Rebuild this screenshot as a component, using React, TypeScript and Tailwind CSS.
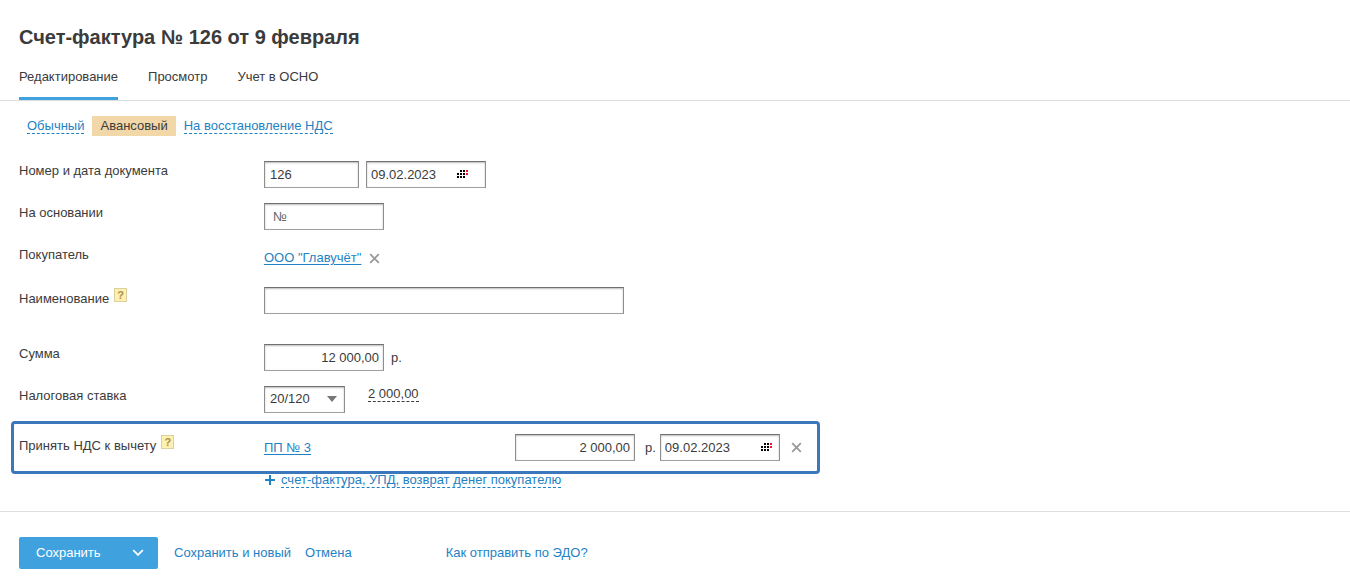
import React, { useState } from 'react';
import clsx from 'clsx';

const FIELD =
  'h-[27px] border border-t-[#707070] border-x-[#8e8e8e] border-b-[#a0a0a0] bg-white text-[13px] leading-4 text-[#3b3b3b] shadow-[inset_0_1px_2px_#bdbdbd] outline-none';
const LINK = 'text-[#1f82c4] hover:text-[#d9534f]';
const DASHED_LINK = 'cursor-pointer border-b border-dashed border-[#1f82c4] text-[#1f82c4]';

const TABS = ['Редактирование', 'Просмотр', 'Учет в ОСНО'];
const KINDS = ['Обычный', 'Авансовый', 'На восстановление НДС'];

// x, y, color
const CALENDAR_DOTS: [number, number, string][] = [
  [3, 0, '#000'],
  [6, 0, '#000'],
  [9, 0, '#f0142d'],
  [0, 3, '#000'],
  [3, 3, '#000'],
  [6, 3, '#000'],
  [9, 3, '#f0142d'],
  [0, 6, '#000'],
  [3, 6, '#000'],
  [6, 6, '#000'],
];

function CalendarIcon() {
  return (
    <svg width="11" height="8" viewBox="0 0 11 8" shapeRendering="crispEdges">
      {CALENDAR_DOTS.map(([x, y, fill]) => (
        <rect key={`${x}-${y}`} x={x} y={y} width="2" height="2" fill={fill} />
      ))}
    </svg>
  );
}

function RemoveButton({ label }: { label: string }) {
  return (
    <button type="button" aria-label={label} className="flex cursor-pointer items-center">
      <svg width="11" height="11" viewBox="0 0 11 11" stroke="#999" strokeWidth="1.8">
        <path d="M1.2 1.2 9.8 9.8M9.8 1.2 1.2 9.8" />
      </svg>
    </button>
  );
}

function HelpButton() {
  return (
    <button
      type="button"
      aria-label="Подсказка"
      className="flex h-3.5 w-[13px] cursor-help items-center justify-center border border-[#ddd0a0] bg-[#fdf0b0] text-[11px] leading-3 font-bold text-[#a8904a]"
    >
      ?
    </button>
  );
}

interface DateFieldProps {
  id?: string;
  label: string;
  value: string;
  compact?: boolean;
  onChange: (value: string) => void;
}

function DateField({ id, label, value, compact, onChange }: DateFieldProps) {
  return (
    <div className="relative w-[120px]">
      <input
        id={id}
        aria-label={label}
        className={clsx(FIELD, 'block w-full pr-8 pl-1')}
        value={value}
        onChange={(e) => onChange(e.target.value)}
      />
      <button
        type="button"
        aria-label="Календарь"
        className={clsx('absolute top-[9px] cursor-pointer', compact ? 'right-2' : 'right-[18px]')}
      >
        <CalendarIcon />
      </button>
    </div>
  );
}

interface RowProps {
  label: string;
  htmlFor?: string;
  hint?: boolean;
  className?: string;
  children: React.ReactNode;
}

function Row({ label, htmlFor, hint, className, children }: RowProps) {
  const Caption = htmlFor ? 'label' : 'span';
  return (
    <div className={clsx('flex min-h-[27px] items-start', className)}>
      <div className="flex w-[245px] shrink-0 items-start gap-[5px] pt-px">
        <Caption htmlFor={htmlFor} className={hint ? 'pt-[3px]' : 'pt-px'}>
          {label}
        </Caption>
        {hint && <HelpButton />}
      </div>
      {children}
    </div>
  );
}

export default function App() {
  const [tab, setTab] = useState(TABS[0]);
  const [kind, setKind] = useState(KINDS[1]);
  const [number, setNumber] = useState('126');
  const [date, setDate] = useState('09.02.2023');
  const [basis, setBasis] = useState('');
  const [title, setTitle] = useState('');
  const [sum, setSum] = useState('12 000,00');
  const [rate, setRate] = useState('20/120');
  const [deduction, setDeduction] = useState('2 000,00');
  const [deductionDate, setDeductionDate] = useState('09.02.2023');

  return (
    <form
      className="min-h-screen bg-white font-['Liberation_Sans',Arial,sans-serif] text-[13px] leading-4 text-[#3b3b3b]"
      onSubmit={(e) => e.preventDefault()}
    >
      <header className="border-b border-[#dedede] px-[19px] pt-[25px]">
        <h1 className="text-xl leading-6 font-bold">Счет-фактура № 126 от 9 февраля</h1>
        <nav className="mt-5 flex gap-[30px]">
          {TABS.map((name) => (
            <button
              key={name}
              type="button"
              onClick={() => setTab(name)}
              className={clsx(
                'cursor-pointer border-b-[3px] pb-3',
                name === tab ? 'border-[#3fa2df]' : 'border-transparent'
              )}
            >
              {name}
            </button>
          ))}
        </nav>
      </header>

      <main className="pt-[15px] pb-[23px]">
        <div className="flex px-[19px]">
          {KINDS.map((name) => (
            <button
              key={name}
              type="button"
              onClick={() => setKind(name)}
              className={clsx('cursor-pointer px-2 py-0.5', name === kind && 'bg-[#f2d7a8]')}
            >
              <span className={name === kind ? '' : DASHED_LINK}>{name}</span>
            </button>
          ))}
        </div>

        <div className="mt-[25px] flex flex-col gap-[15px] px-[19px]">
          <Row label="Номер и дата документа" htmlFor="number">
            <div className="flex gap-[7px]">
              <input
                id="number"
                className={clsx(FIELD, 'w-[95px] px-[5px]')}
                value={number}
                onChange={(e) => setNumber(e.target.value)}
              />
              <DateField label="Дата документа" value={date} onChange={setDate} />
            </div>
          </Row>

          <Row label="На основании" htmlFor="basis">
            <input
              id="basis"
              placeholder="№"
              className={clsx(FIELD, 'w-[120px] px-2 placeholder:text-[#666]')}
              value={basis}
              onChange={(e) => setBasis(e.target.value)}
            />
          </Row>

          <Row label="Покупатель">
            <div className="flex gap-2 pt-[5px]">
              <a href="#buyer" className={clsx(LINK, 'underline underline-offset-2')}>
                ООО "Главучёт"
              </a>
              <RemoveButton label="Удалить покупателя" />
            </div>
          </Row>

          <Row label="Наименование" htmlFor="title" hint>
            <input
              id="title"
              className={clsx(FIELD, 'w-full max-w-[360px] px-[5px]')}
              value={title}
              onChange={(e) => setTitle(e.target.value)}
            />
          </Row>

          <Row label="Сумма" htmlFor="sum" className="mt-[15px]">
            <div className="flex items-center gap-[7px]">
              <input
                id="sum"
                className={clsx(FIELD, 'w-[120px] px-1 text-right')}
                value={sum}
                onChange={(e) => setSum(e.target.value)}
              />
              <span>р.</span>
            </div>
          </Row>

          <Row label="Налоговая ставка" htmlFor="rate">
            <div className="relative">
              <select
                id="rate"
                className={clsx(FIELD, 'block w-[81px] appearance-none pb-0.5 pl-[5px]')}
                value={rate}
                onChange={(e) => setRate(e.target.value)}
              >
                <option>20/120</option>
                <option>10/110</option>
              </select>
              <svg
                width="10"
                height="6"
                viewBox="0 0 10 6"
                className="pointer-events-none absolute top-2.5 right-2"
                fill="#777"
              >
                <path d="M0 0h10L5 6z" />
              </svg>
            </div>
            <button type="button" className="ml-[23px] cursor-pointer">
              <span className="border-b border-dashed border-[#3b3b3b]">2 000,00</span>
            </button>
          </Row>
        </div>

        {/* Вычет НДС */}
        <section className="mt-2 ml-[11px] max-w-[809px] rounded-[4px] border-[3px] border-[#3a78bb] px-[5px] py-2.5">
          <Row label="Принять НДС к вычету" hint>
            <div className="flex items-center">
              <div className="w-[251px]">
                <a href="#payment" className={clsx(LINK, 'underline underline-offset-2')}>
                  ПП № 3
                </a>
              </div>
              <input
                aria-label="Сумма вычета"
                className={clsx(FIELD, 'w-[120px] px-1 text-right')}
                value={deduction}
                onChange={(e) => setDeduction(e.target.value)}
              />
              <span className="mr-1 ml-2.5">р.</span>
              <DateField label="Дата вычета" value={deductionDate} compact onChange={setDeductionDate} />
              <div className="ml-[11px]">
                <RemoveButton label="Удалить вычет" />
              </div>
            </div>
          </Row>
        </section>

        <div className="-mt-0.5 pl-[264px]">
          <button type="button" className="flex cursor-pointer items-center gap-1.5">
            <svg width="11" height="11" viewBox="0 0 11 11" stroke="#1f82c4" strokeWidth="2">
              <path d="M1 5h10M6 0v10" />
            </svg>
            <span>
              <span className={DASHED_LINK}>счет-фактура, УПД, возврат денег покупателю</span>
            </span>
          </button>
        </div>
      </main>

      <footer className="flex flex-wrap items-center border-t border-[#dedede] px-[19px] py-[25px]">
        <div className="flex h-8 overflow-hidden rounded-[2px] bg-[#3fa2df] text-white">
          <button type="submit" className="w-[99px] cursor-pointer pl-[17px] text-left">
            Сохранить
          </button>
          <button
            type="button"
            aria-label="Другие варианты сохранения"
            className="flex w-10 cursor-pointer items-center justify-center"
          >
            <svg width="12" height="8" viewBox="0 0 12 8" fill="none" stroke="#fff" strokeWidth="1.8">
              <path d="M1.2 1.2 6 6l4.8-4.8" />
            </svg>
          </button>
        </div>
        <button type="button" className={clsx(LINK, 'ml-4 cursor-pointer')}>
          Сохранить и новый
        </button>
        <button type="button" className={clsx(LINK, 'ml-3.5 cursor-pointer')}>
          Отмена
        </button>
        <a href="#edo" className={clsx(LINK, 'ml-[94px]')}>
          Как отправить по ЭДО?
        </a>
      </footer>
    </form>
  );
}
